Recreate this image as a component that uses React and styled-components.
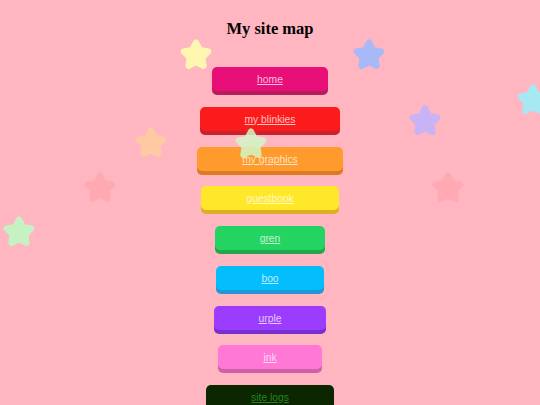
import React from 'react'
import styled, { createGlobalStyle } from 'styled-components'

const GlobalStyle = createGlobalStyle`
  html, body {
    margin: 0;
    padding: 0;
    background: #ffb6c1;
  }
`

// Pages in the site map, with their button colours
const links = [
  { label: 'home', bg: '#e90f78', shade: '#b81c5c' },
  { label: 'my blinkies', bg: '#fb1b1b', shade: '#c9222c' },
  { label: 'my graphics', bg: '#ff9a2c', shade: '#de7a22' },
  { label: 'guestbook', bg: '#ffe829', shade: '#dcb022' },
  { label: 'gren', bg: '#24d462', shade: '#1fa84e' },
  { label: 'boo', bg: '#03bdfd', shade: '#1f98d6' },
  { label: 'urple', bg: '#9b3cfe', shade: '#7630d2' },
  { label: 'ink', bg: '#ff78d6', shade: '#cf5fa8' },
  { label: 'site logs', bg: '#0b2600', shade: '#061800', ink: '#23861a' },
]

// Floating stars: centre x / y, colour, opacity
const stars = [
  { x: 196, y: 55, color: '#fff6b2' },
  { x: 369, y: 55, color: '#a9b8f7' },
  { x: 533, y: 100, color: '#a6e9f2' },
  { x: 425, y: 121, color: '#c8b3f7' },
  { x: 151, y: 143, color: '#ffc9a3' },
  { x: 251, y: 144, color: '#d2f7c6', alpha: 0.85 },
  { x: 100, y: 188, color: '#ffa9b2' },
  { x: 448, y: 188, color: '#ffa9b2' },
  { x: 19, y: 232, color: '#c6f1c2' },
]

const starPoints = (() => {
  const pts = []
  for (let i = 0; i < 10; i++) {
    const r = i % 2 === 0 ? 13 : 6.8
    const a = -Math.PI / 2 + (i * Math.PI) / 5
    pts.push(`${(17 + r * Math.cos(a)).toFixed(2)},${(16.5 + r * Math.sin(a)).toFixed(2)}`)
  }
  return pts.join(' ')
})()

const Page = styled.div`
  position: relative;
  min-height: 405px;
  overflow: hidden;
  background: #ffb6c1;
  padding-top: 19px;
  box-sizing: border-box;
`

const Title = styled.h1`
  margin: 0 0 29px;
  font-family: 'Liberation Serif', 'Times New Roman', serif;
  font-size: 16.5px;
  line-height: 19px;
  font-weight: bold;
  text-align: center;
  color: #000;
`

const Nav = styled.nav`
  display: flex;
  flex-direction: column;
  align-items: center;
  gap: 15.75px;
`

const NavButton = styled.a`
  display: block;
  height: 24px;
  padding: 0 45px;
  border-radius: 5px;
  background: ${(p) => p.$bg};
  box-shadow: 0 4px 0 ${(p) => p.$shade};
  font-family: 'Liberation Sans', Arial, sans-serif;
  font-size: 10.3px;
  line-height: 26px;
  color: ${(p) => p.$ink || 'rgba(255, 255, 255, 0.74)'};
  text-decoration: underline;
  white-space: nowrap;
  overflow: hidden;
  cursor: pointer;
`

const Star = styled.svg`
  position: absolute;
  width: 34px;
  height: 32px;
  pointer-events: none;
  opacity: ${(p) => p.$alpha};
  filter: blur(0.4px);
`

function App() {
  return (
    <Page>
      <GlobalStyle />
      <Title>My site map</Title>
      <Nav>
        {links.map((link) => (
          <NavButton key={link.label} $bg={link.bg} $shade={link.shade} $ink={link.ink}>
            {link.label}
          </NavButton>
        ))}
      </Nav>

      {stars.map((star, i) => (
        <Star
          key={i}
          viewBox="0 0 34 32"
          $alpha={star.alpha || 1}
          style={{ left: star.x - 17, top: star.y - 16 }}
        >
          <polygon
            points={starPoints}
            fill={star.color}
            stroke={star.color}
            strokeWidth="6"
            strokeLinejoin="round"
          />
        </Star>
      ))}
    </Page>
  )
}

export default App
